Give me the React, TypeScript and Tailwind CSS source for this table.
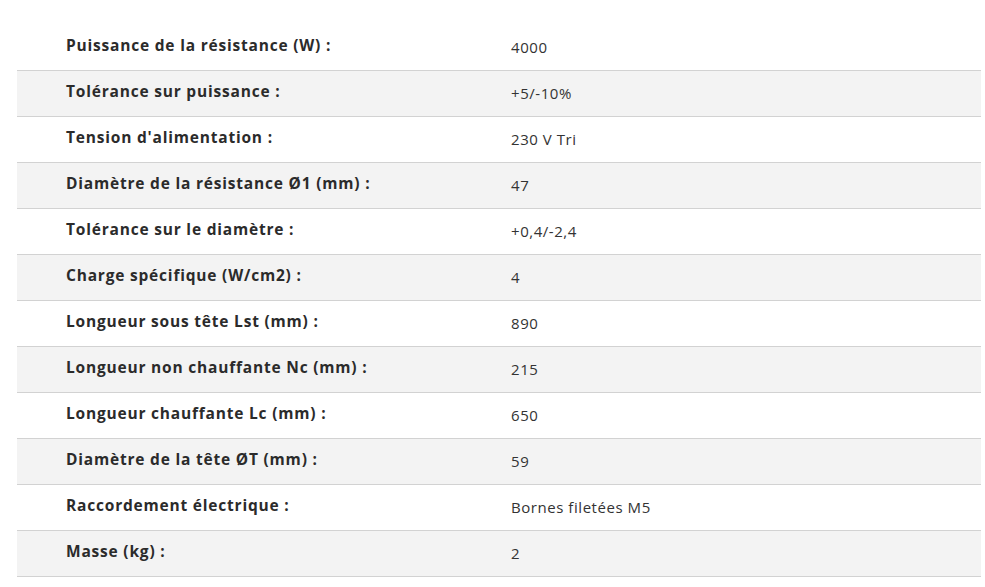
import React from "react";

const specs: [string, string][] = [
  ["Puissance de la résistance (W) :", "4000"],
  ["Tolérance sur puissance :", "+5/-10%"],
  ["Tension d'alimentation :", "230 V Tri"],
  ["Diamètre de la résistance Ø1 (mm) :", "47"],
  ["Tolérance sur le diamètre :", "+0,4/-2,4"],
  ["Charge spécifique (W/cm2) :", "4"],
  ["Longueur sous tête Lst (mm) :", "890"],
  ["Longueur non chauffante Nc (mm) :", "215"],
  ["Longueur chauffante Lc (mm) :", "650"],
  ["Diamètre de la tête ØT (mm) :", "59"],
  ["Raccordement électrique :", "Bornes filetées M5"],
  ["Masse (kg) :", "2"],
];

const App = () => {
  return (
    <div className="min-h-[587px] bg-white pt-[25px] pl-[17px] pr-1 font-['Open_Sans',sans-serif] text-[#333333]">
      <div className="w-[964px]">
        {specs.map(([label, value], i) => (
          <div
            key={label}
            className={
              i % 2 === 0
                ? "grid grid-cols-[494px_1fr] h-[46px] items-center border-b border-[#d2d2d2] bg-white"
                : "grid grid-cols-[494px_1fr] h-[46px] items-center border-b border-[#d2d2d2] bg-[#f3f3f3]"
            }
          >
            <p className="pl-[49px] text-[15.5px] font-bold tracking-[0.8px] text-[#2b2b2b] -mt-1">{label}</p>
            <p className="text-[15px] tracking-[0.55px] text-[#333333]">{value}</p>
          </div>
        ))}
      </div>
    </div>
  );
};

export default App;
